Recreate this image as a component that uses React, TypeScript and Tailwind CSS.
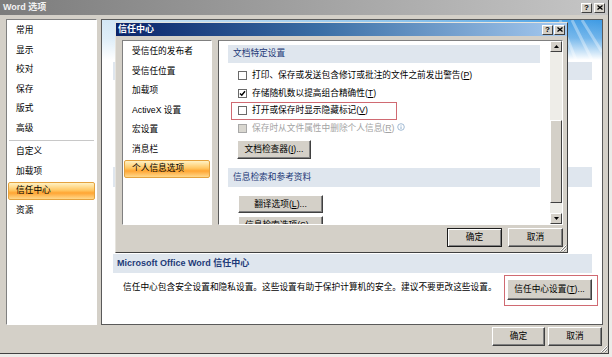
import React from "react";

const font = "font-['Liberation_Sans','Noto_Sans_CJK_SC',sans-serif]";

function Btn({
  children,
  className = "",
  primary = false,
}: {
  children: React.ReactNode;
  className?: string;
  primary?: boolean;
}) {
  return (
    <div
      className={`flex items-center justify-center bg-[#d4d0c8] text-black leading-none ${
        primary
          ? "border border-[#1c1c1c] shadow-[inset_1px_1px_0_#ffffff,inset_-1px_-1px_0_#808080]"
          : "border border-t-white border-l-white border-r-[#404040] border-b-[#404040] shadow-[inset_-1px_-1px_0_#808080]"
      } ${className}`}
    >
      {children}
    </div>
  );
}

function CapBtn({ kind, className = "" }: { kind: "help" | "close"; className?: string }) {
  return (
    <div
      className={`flex items-center justify-center bg-[#d4d0c8] border border-t-white border-l-white border-r-[#404040] border-b-[#404040] ${className}`}
    >
      {kind === "help" ? (
        <span className="text-[8px] font-bold leading-none text-black">?</span>
      ) : (
        <svg width="6" height="5" viewBox="0 0 6 5">
          <path d="M0.5 0.5L5.5 4.5M5.5 0.5L0.5 4.5" stroke="#000" strokeWidth="1.3" />
        </svg>
      )}
    </div>
  );
}

function Check({ checked = false, disabled = false }: { checked?: boolean; disabled?: boolean }) {
  return (
    <div
      className={`w-[9px] h-[9px] shrink-0 flex items-center justify-center border ${
        disabled ? "border-[#a8a8a8] bg-[#d9d7d0]" : "border-[#6a6a6a] bg-white"
      }`}
    >
      {checked && (
        <svg width="7" height="7" viewBox="0 0 7 7">
          <path d="M1 3.4L2.8 5.3L6 1.3" stroke="#000" strokeWidth="1.4" fill="none" />
        </svg>
      )}
    </div>
  );
}

function NavItem({ label, active = false }: { label: string; active?: boolean }) {
  return (
    <div className="h-[19.5px] px-[1px] py-[1px]">
      <div
        className={`h-full flex items-center ${
          active
            ? "pl-[7px] rounded-[2px] border border-[#e4a23e] bg-[linear-gradient(#fff2c4,#ffc763_45%,#ffa533_62%,#ffd98c)]"
            : "pl-[8px]"
        }`}
      >
        {label}
      </div>
    </div>
  );
}

function Grip() {
  return (
    <svg width="9" height="9" viewBox="0 0 9 9">
      <path d="M8 2L2 8M8 5L5 8" stroke="#ffffff" strokeWidth="1" />
      <path d="M8.5 2.5L2.5 8.5M8.5 5.5L5.5 8.5" stroke="#808080" strokeWidth="1" />
    </svg>
  );
}

function Arrow({ up }: { up: boolean }) {
  return (
    <div className="h-[11px] flex items-center justify-center bg-[#d4d0c8] border border-t-white border-l-white border-r-[#404040] border-b-[#404040]">
      <svg width="5" height="3" viewBox="0 0 5 3">
        <path d={up ? "M0 3L2.5 0L5 3Z" : "M0 0L2.5 3L5 0Z"} fill="#000" />
      </svg>
    </div>
  );
}

const sidebarTop = ["常用", "显示", "校对", "保存", "版式", "高级"];
const sidebarBottom = ["自定义", "加载项", "信任中心", "资源"];
const trustNav = ["受信任的发布者", "受信任位置", "加载项", "ActiveX 设置", "宏设置", "消息栏", "个人信息选项"];

export default function App() {
  return (
    <div className={`w-[612px] h-[357px] bg-[#ecebe8] ${font} text-[8.7px] text-black`}>
      <div className="relative w-[609px] h-[354px] bg-[#d4d0c8] border-r border-b border-[#404040] flex flex-col">
        {/* title bar */}
        <div className="h-[15px] shrink-0 flex items-center justify-between bg-[linear-gradient(to_right,#7c7c7c,#c6c6c6)] pl-[3px] pr-[3px]">
          <span className="text-[9px] font-bold text-[#f2f2f2] leading-none">Word 选项</span>
          <div className="flex gap-[2px]">
            <CapBtn kind="help" className="w-[11px] h-[10px]" />
            <CapBtn kind="close" className="w-[11px] h-[10px]" />
          </div>
        </div>

        <div className="flex pt-[4px]">
          {/* left categories */}
          <div className="ml-[6px] w-[91px] h-[306px] bg-white border border-t-[#808080] border-l-[#808080] border-r-[#ffffff] border-b-[#ffffff] pt-[1px]">
            {sidebarTop.map((s) => (
              <NavItem key={s} label={s} />
            ))}
            <div className="h-[4px] flex items-center px-[2px]">
              <div className="h-px w-full bg-[#c8c8c8]" />
            </div>
            {sidebarBottom.map((s) => (
              <NavItem key={s} label={s} active={s === "信任中心"} />
            ))}
          </div>

          {/* right panel */}
          <div className="ml-[4px] w-[502px] h-[306px] bg-white border border-[#5a5a5a] flex flex-col">
            <svg className="shrink-0" width="500" height="40" viewBox="0 0 500 40" preserveAspectRatio="none">
              <defs>
                <linearGradient id="hx" x1="0" y1="0" x2="1" y2="0">
                  <stop offset="0" stopColor="#d4e8f6" />
                  <stop offset="0.6" stopColor="#8cc3ec" />
                  <stop offset="1" stopColor="#3f9be4" />
                </linearGradient>
                <linearGradient id="hy" x1="0" y1="0" x2="0" y2="1">
                  <stop offset="0" stopColor="#ffffff" stopOpacity="0" />
                  <stop offset="0.45" stopColor="#ffffff" stopOpacity="0.25" />
                  <stop offset="1" stopColor="#ffffff" stopOpacity="1" />
                </linearGradient>
              </defs>
              <rect width="500" height="40" fill="url(#hx)" />
              <path d="M470 0L490 40M480 0L500 32M458 0L474 40" stroke="#ffffff" strokeOpacity="0.35" strokeWidth="3" />
              <rect width="500" height="40" fill="url(#hy)" />
            </svg>
            <div className="mt-[2px] ml-[11px] mr-[10px] h-[18px] bg-[#dfe6ee]" />
            <div className="mt-[87px] ml-[11px] mr-[10px] h-[20px] bg-[#dfe6ee]" />
            <div className="mt-[67px] ml-[11px] mr-[10px] h-[19px] bg-[#dfe6ee] flex items-center pl-[4px]">
              <span className="font-bold text-[9px] text-[#1d3a78]">Microsoft Office Word 信任中心</span>
            </div>
            <div className="mt-[2px] pl-[21px] pr-[4px] flex items-start justify-between">
              <span className="mt-[6px] leading-[12px]">
                信任中心包含安全设置和隐私设置。这些设置有助于保护计算机的安全。建议不要更改这些设置。
              </span>
              <div className="w-[94px] h-[31px] border border-[#d06a72] pt-[3px] pl-[2px]">
                <Btn className="w-[85px] h-[21px]">
                  信任中心设置(<u>T</u>)...
                </Btn>
              </div>
            </div>
          </div>
        </div>

        {/* bottom buttons */}
        <div className="mt-[2px] flex justify-end gap-[3px] pr-[6px]">
          <Btn className="w-[53px] h-[19px]">确定</Btn>
          <Btn className="w-[54px] h-[19px]">取消</Btn>
        </div>
        <div className="absolute right-0 bottom-0">
          <Grip />
        </div>

        {/* trust center dialog */}
        <div className="absolute left-[115px] top-[22px] w-[453px] h-[231px] bg-[#d4d0c8] border border-t-[#e6e4de] border-l-[#e6e4de] border-r-[#404040] border-b-[#404040] flex flex-col">
          <div className="h-[13px] shrink-0 flex items-center justify-between bg-[linear-gradient(to_right,#0a246a,#3a6ea5_45%,#a6caf0)] pl-[2px] pr-[2px]">
            <span className="text-[9px] font-bold text-white leading-none">信任中心</span>
            <div className="flex gap-[1px]">
              <CapBtn kind="help" className="w-[11px] h-[10px]" />
              <CapBtn kind="close" className="w-[11px] h-[10px]" />
            </div>
          </div>

          <div className="flex mt-[4px] ml-[6px]">
            <div className="w-[90px] h-[185px] bg-white border border-t-[#808080] border-l-[#808080] border-r-white border-b-white pt-[1px]">
              {trustNav.map((s) => (
                <NavItem key={s} label={s} active={s === "个人信息选项"} />
              ))}
            </div>

            <div className="ml-[6px] w-[345px] h-[185px] bg-white border border-t-[#808080] border-l-[#5a5a5a] border-r-white border-b-white flex">
              <div className="flex-1 overflow-hidden">
                <div className="mt-[4px] ml-[9px] mr-[10px] h-[18px] bg-[#dfe6ee] flex items-center pl-[5px] text-[#1d3a78]">
                  文档特定设置
                </div>
                <div className="mt-[4px] h-[17.5px] pl-[19px] flex items-center gap-[5px]">
                  <Check />
                  <span>
                    打印、保存或发送包含修订或批注的文件之前发出警告(<u>P</u>)
                  </span>
                </div>
                <div className="h-[17.5px] pl-[19px] flex items-center gap-[5px]">
                  <Check checked />
                  <span>
                    存储随机数以提高组合精确性(<u>T</u>)
                  </span>
                </div>
                <div className="h-[17.5px] ml-[12px] w-[166px] pl-[6px] border border-[#d06a72] flex items-center gap-[5px]">
                  <Check />
                  <span>
                    打开或保存时显示隐藏标记(<u>V</u>)
                  </span>
                </div>
                <div className="h-[17.5px] pl-[19px] flex items-center gap-[5px] text-[#a3a3a3]">
                  <Check disabled />
                  <span>
                    保存时从文件属性中删除个人信息(<u>R</u>)
                  </span>
                  <svg width="8" height="8" viewBox="0 0 8 8" className="-ml-[2px] -mt-[3px]">
                    <circle cx="4" cy="4" r="3.3" fill="none" stroke="#8aa9c9" strokeWidth="0.8" />
                    <path d="M4 3.4V6M4 2V2.6" stroke="#8aa9c9" strokeWidth="0.9" />
                  </svg>
                </div>
                <Btn className="mt-[3px] ml-[18px] w-[74px] h-[19px]">
                  文档检查器(<u>I</u>)...
                </Btn>
                <div className="mt-[9px] ml-[9px] mr-[10px] h-[19px] bg-[#dfe6ee] flex items-center pl-[5px] text-[#1d3a78]">
                  信息检索和参考资料
                </div>
                <Btn className="mt-[8px] ml-[19px] w-[85px] h-[18px]">
                  翻译选项(<u>L</u>)...
                </Btn>
                <Btn className="mt-[3px] ml-[19px] w-[85px] h-[18px]">
                  信息检索选项(<u>S</u>)...
                </Btn>
              </div>
              <div className="w-[12px] flex flex-col">
                <Arrow up />
                <div className="h-[68px] bg-[#eeede8]" />
                <div className="h-[83px] bg-[#d4d0c8] border border-t-white border-l-white border-r-[#404040] border-b-[#404040]" />
                <div className="flex-1 bg-[#eeede8]" />
                <Arrow up={false} />
              </div>
            </div>
          </div>

          <div className="mt-[3px] flex justify-end gap-[6px] pr-[4px]">
            <Btn primary className="w-[55px] h-[19px]">
              确定
            </Btn>
            <Btn className="w-[55px] h-[19px]">取消</Btn>
          </div>
          <div className="absolute right-0 bottom-0">
            <Grip />
          </div>
        </div>
      </div>
    </div>
  );
}
